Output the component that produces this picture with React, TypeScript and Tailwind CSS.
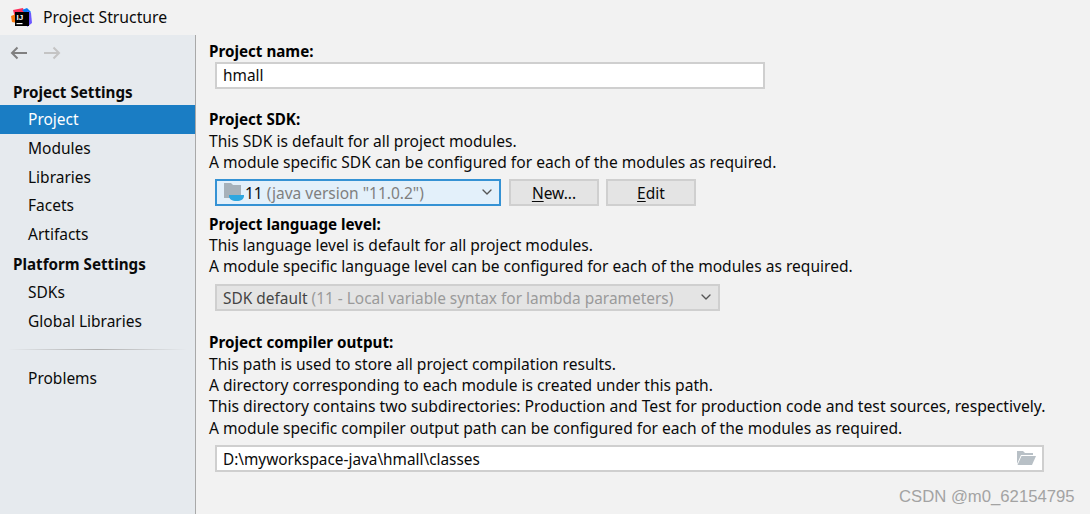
import { ChevronDown } from 'lucide-react'

const font = { fontFamily: '"Noto Sans", sans-serif' }

function SidebarItem({ label, active }: { label: string; active?: boolean }) {
  return (
    <div className={`h-[28.75px] pl-[28px] text-[15.5px] leading-[28.75px] ${active ? 'bg-[#1a7dc4] text-white' : 'text-[#0a0a0a]'}`}>
      {label}
    </div>
  )
}

function Heading({ children }: { children: string }) {
  return <div className="text-[15.2px] font-bold leading-[21.4px] text-black">{children}</div>
}

function Line({ children }: { children: string }) {
  return <div className="text-[15.58px] leading-[21.4px] whitespace-nowrap text-[#0a0a0a]">{children}</div>
}

function Logo() {
  return (
    <svg width="21" height="20" viewBox="0 0 21 20" className="shrink-0">
      <path d="M2 2 L12 0 L14 6 L4 10 Z" fill="#fe315d" />
      <path d="M0 8 L5 6 L6 15 L1 14 Z" fill="#f97a12" />
      <path d="M11 2 L16 0 L20 4 L17 8 Z" fill="#087cfa" />
      <path d="M16 3 L20 5 L21 15 L16 19 Z" fill="#6b57ff" />
      <rect x="4" y="4" width="14" height="14" fill="#000" />
      <rect x="5.5" y="15" width="6" height="1.2" fill="#fff" />
      <text x="5.5" y="12" fontSize="8" fontWeight="700" fill="#fff" fontFamily="Liberation Sans">IJ</text>
    </svg>
  )
}

function Arrow({ color, flip }: { color: string; flip?: boolean }) {
  return (
    <svg width="18" height="14" viewBox="0 0 18 14" className={flip ? 'rotate-180' : ''}>
      <path d="M17 7 H2 M7.5 1.5 L2 7 L7.5 12.5" fill="none" stroke={color} strokeWidth="2" />
    </svg>
  )
}

function FolderIcon() {
  return (
    <svg width="20" height="18" viewBox="0 0 20 18" className="shrink-0">
      <path d="M0 0 H7 L9 2 H17 V15 H0 Z" fill="#a6b1ba" />
      <path d="M5 12 H20 V13 C20 16 17 18 12.5 18 C8 18 5 16 5 13 Z" fill="#2ea7e0" />
    </svg>
  )
}

function OpenFolderIcon() {
  return (
    <svg width="19" height="16" viewBox="0 0 19 16">
      <path d="M0 1 H6 L8 3 H16 V5 H4 L0 14 Z" fill="#b8c0c6" />
      <path d="M4.5 6 H19 L15 15 H0.5 Z" fill="#b8c0c6" />
    </svg>
  )
}

function Btn({ first, rest }: { first: string; rest: string }) {
  return (
    <div className="flex h-[27px] w-[90px] items-center justify-center border-2 border-[#cfcfcf] bg-[#e4e4e4] pt-[2px] text-[15.5px] text-[#0a0a0a]">
      <span className="underline underline-offset-2">{first}</span>
      {rest}
    </div>
  )
}

export default function App() {
  return (
    <div className="relative flex h-[514px] w-[1090px] flex-col overflow-hidden bg-[#f2f2f2]" style={font}>
      <div className="flex h-[35px] shrink-0 items-center gap-[11px] pl-[11px]">
        <Logo />
        <span className="text-[15.75px] text-[#0a0a0a]">Project Structure</span>
      </div>
      <div className="flex min-h-0 flex-1">
        <aside className="w-[196px] shrink-0 border-r border-[#a9a9a9] bg-[#e6eaee]">
          <div className="flex h-[35px] items-center gap-[15px] pl-[10px]">
            <Arrow color="#808080" />
            <Arrow color="#c4c4c4" flip />
          </div>
          <div className="mt-[9px] h-[26px] pl-[13px] text-[15.2px] font-bold leading-[26px] text-[#0a0a0a]">Project Settings</div>
          <SidebarItem label="Project" active />
          <SidebarItem label="Modules" />
          <SidebarItem label="Libraries" />
          <SidebarItem label="Facets" />
          <SidebarItem label="Artifacts" />
          <div className="h-[29px] pl-[13px] text-[15.2px] font-bold leading-[31px] text-[#0a0a0a]">Platform Settings</div>
          <SidebarItem label="SDKs" />
          <SidebarItem label="Global Libraries" />
          <div className="mx-[8px] my-[14px] h-px bg-gradient-to-r from-[#e6eaee] via-[#b0b0b0] to-[#e6eaee]" />
          <SidebarItem label="Problems" />
        </aside>
        <main className="flex-1 pl-[13px] pt-[6px]">
          <Heading>Project name:</Heading>
          <div className="ml-[6px] flex h-[27px] w-[550px] items-center border-2 border-[#cfcfcf] bg-white pl-[6px] text-[15.4px] text-[#0a0a0a]">
            hmall
          </div>
          <div className="mt-[20px]">
            <Heading>Project SDK:</Heading>
            <Line>This SDK is default for all project modules.</Line>
            <Line>A module specific SDK can be configured for each of the modules as required.</Line>
          </div>
          <div className="ml-[6px] mt-[5px] flex gap-[8px]">
            <div className="flex h-[27px] w-[286px] items-center border-2 border-[#3592d4] bg-[#e3f0fa] pl-[7px] pr-[4px] text-[15.5px]">
              <FolderIcon />
              <span className="ml-[1px] pt-[2px] text-[#0a0a0a]">11</span>
              <span className="ml-[4px] pt-[2px] text-[#7f7f7f]">(java version "11.0.2")</span>
              <ChevronDown className="ml-auto size-[16px] text-[#555]" />
            </div>
            <Btn first="N" rest="ew..." />
            <div className="-ml-px">
              <Btn first="E" rest="dit" />
            </div>
          </div>
          <div className="mt-[8px]">
            <Heading>Project language level:</Heading>
            <Line>This language level is default for all project modules.</Line>
            <Line>A module specific language level can be configured for each of the modules as required.</Line>
          </div>
          <div className="ml-[6px] mt-[6px] flex h-[27px] w-[505px] items-center border-2 border-[#cfcfcf] bg-[#e4e4e4] pl-[6px] pr-[4px] text-[15.43px]">
            <span className="pt-[2px] text-[#444]">SDK default</span>
            <span className="ml-[4px] pt-[2px] text-[#9a9a9a]">(11 - Local variable syntax for lambda parameters)</span>
            <ChevronDown className="ml-auto size-[16px] text-[#555]" />
          </div>
          <div className="mt-[21.4px]">
            <Heading>Project compiler output:</Heading>
            <Line>This path is used to store all project compilation results.</Line>
            <Line>A directory corresponding to each module is created under this path.</Line>
            <div className="text-[15.7px] leading-[21.4px] whitespace-nowrap text-[#0a0a0a]">
              This directory contains two subdirectories: Production and Test for production code and test sources, respectively.
            </div>
            <Line>A module specific compiler output path can be configured for each of the modules as required.</Line>
          </div>
          <div className="ml-[6px] mt-[5.6px] flex h-[27px] w-[829px] items-center justify-between border-2 border-[#cfcfcf] bg-white pl-[6px] pr-[6px] text-[15.35px] text-[#0a0a0a]">
            <span className="pt-[2px]">D:\myworkspace-java\hmall\classes</span>
            <OpenFolderIcon />
          </div>
        </main>
      </div>
      <div className="absolute left-[899px] top-[487px] text-[16.7px] leading-[19px] text-[#a3a3a3]" style={{ fontFamily: '"Liberation Sans", sans-serif' }}>
        CSDN @m0_62154795
      </div>
    </div>
  )
}
